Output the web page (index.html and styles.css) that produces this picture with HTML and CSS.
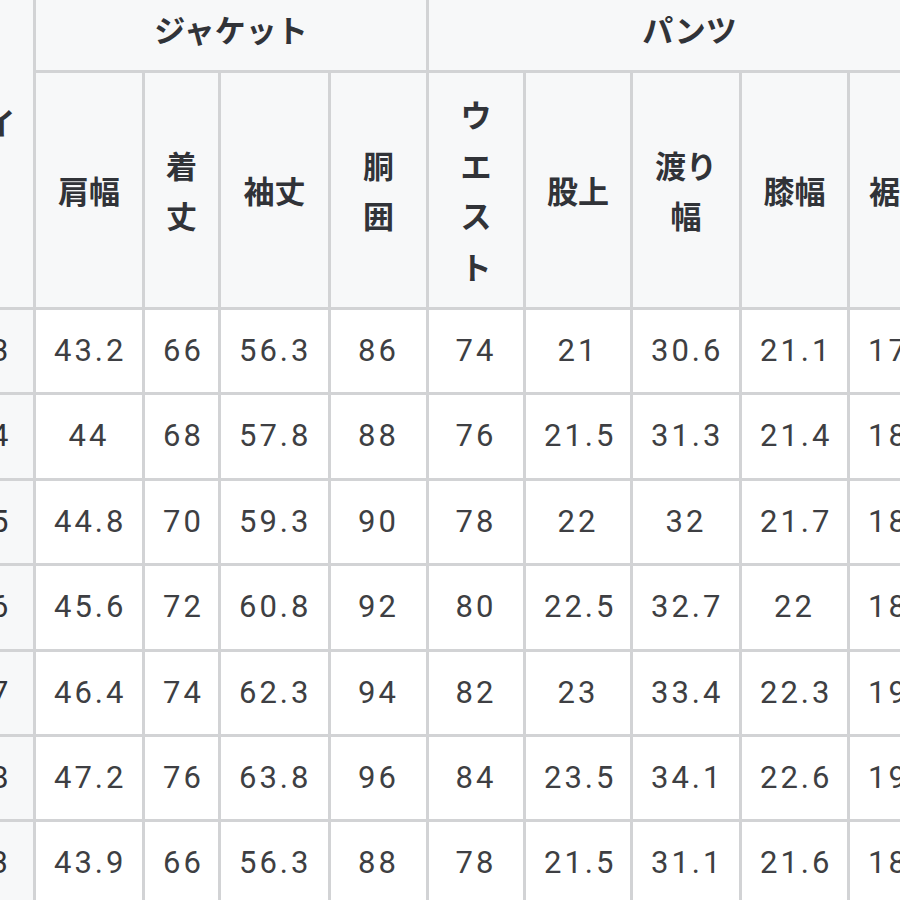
FILE: index.html
```html
<!DOCTYPE html>
<html lang="ja">
<head>
<meta charset="utf-8">
<title>サイズ表</title>
<link rel="stylesheet" href="styles.css">
</head>
<body>
<div class="viewport">
  <table class="size-table">
    <colgroup>
      <col class="c-size">
      <col class="c-kata">
      <col class="c-kitake">
      <col class="c-sode">
      <col class="c-dou">
      <col class="c-waist">
      <col class="c-mata">
      <col class="c-watari">
      <col class="c-hiza">
      <col class="c-suso">
    </colgroup>
    <thead>
      <tr>
        <th rowspan="2" class="head size-head">サイズ</th>
        <th colspan="4" class="head">ジャケット</th>
        <th colspan="5" class="head">パンツ</th>
      </tr>
      <tr>
        <th class="head">肩幅</th>
        <th class="head">着丈</th>
        <th class="head">袖丈</th>
        <th class="head">胴囲</th>
        <th class="head">ウエスト</th>
        <th class="head">股上</th>
        <th class="head">渡り幅</th>
        <th class="head">膝幅</th>
        <th class="head">裾幅</th>
      </tr>
    </thead>
    <tbody>
      <tr><th class="row-head">A3</th><td>43.2</td><td>66</td><td>56.3</td><td>86</td><td>74</td><td>21</td><td>30.6</td><td>21.1</td><td>17.8</td></tr>
      <tr><th class="row-head">A4</th><td>44</td><td>68</td><td>57.8</td><td>88</td><td>76</td><td>21.5</td><td>31.3</td><td>21.4</td><td>18.1</td></tr>
      <tr><th class="row-head">A5</th><td>44.8</td><td>70</td><td>59.3</td><td>90</td><td>78</td><td>22</td><td>32</td><td>21.7</td><td>18.4</td></tr>
      <tr><th class="row-head">A6</th><td>45.6</td><td>72</td><td>60.8</td><td>92</td><td>80</td><td>22.5</td><td>32.7</td><td>22</td><td>18.7</td></tr>
      <tr><th class="row-head">A7</th><td>46.4</td><td>74</td><td>62.3</td><td>94</td><td>82</td><td>23</td><td>33.4</td><td>22.3</td><td>19.0</td></tr>
      <tr><th class="row-head">A8</th><td>47.2</td><td>76</td><td>63.8</td><td>96</td><td>84</td><td>23.5</td><td>34.1</td><td>22.6</td><td>19.3</td></tr>
      <tr><th class="row-head">B3</th><td>43.9</td><td>66</td><td>56.3</td><td>88</td><td>78</td><td>21.5</td><td>31.1</td><td>21.6</td><td>18.3</td></tr>
    </tbody>
  </table>
</div>
</body>
</html>
```

FILE: styles.css
```css
html, body {
  margin: 0;
  padding: 0;
  background: #ffffff;
}

.viewport {
  width: 900px;
  height: 900px;
  overflow: hidden;
}

.size-table {
  border-collapse: collapse;
  table-layout: fixed;
  width: 1021px;
  margin: -15px 0 0 -71px;
  font-family: Roboto, "Noto Sans CJK JP", sans-serif;
}

.c-size { width: 104px; }
.c-kata { width: 109px; }
.c-kitake { width: 76px; }
.c-sode { width: 110px; }
.c-dou { width: 98px; }
.c-waist { width: 97px; }
.c-mata { width: 107px; }
.c-watari { width: 109px; }
.c-hiza { width: 108px; }
.c-suso { width: 103px; }

.size-table th,
.size-table td {
  border: 3px solid #d2d3d5;
  padding: 16px 18px;
  line-height: 50.4px;
  text-align: center;
  vertical-align: middle;
  font-size: 31px;
}

.size-table .head {
  background: #f7f8f9;
  color: #313338;
  font-family: "Noto Sans CJK JP", sans-serif;
  font-weight: 700;
}

.size-table .size-head {
  padding-left: 20px;
  padding-right: 16px;
}

.size-table .row-head {
  background: #f7f8f9;
  color: #333438;
  font-weight: 400;
  letter-spacing: 1px;
  padding-left: 28px;
  padding-right: 14px;
}

.size-table td {
  background: #ffffff;
  color: #3e3f43;
  letter-spacing: 3px;
}
```
